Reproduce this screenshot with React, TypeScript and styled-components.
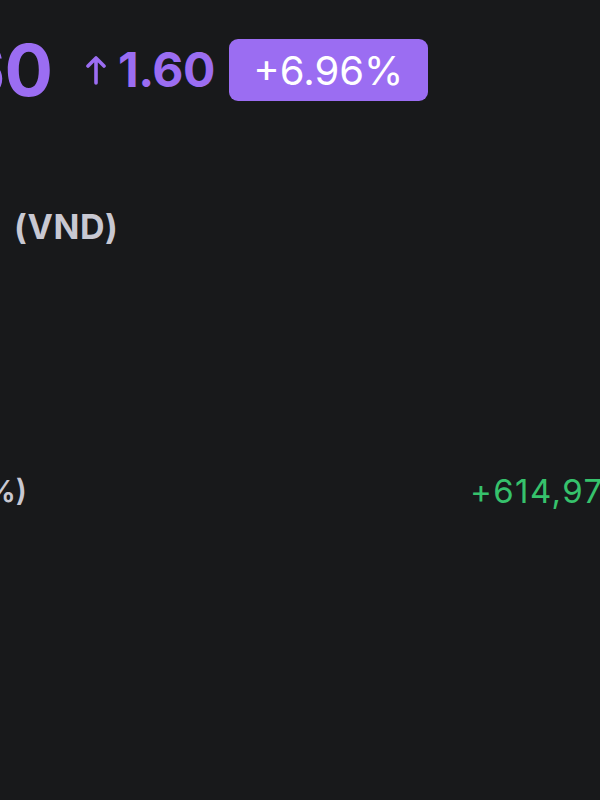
import React from 'react';
import styled, { createGlobalStyle } from 'styled-components';

const GlobalStyle = createGlobalStyle`
  html, body {
    margin: 0;
    padding: 0;
    background: #18191b;
    overflow: hidden;
  }
  body {
    font-family: Inter, "Noto Sans", "Liberation Sans", sans-serif;
  }
`;

const Page = styled.div`
  width: 600px;
  height: 800px;
  display: flex;
  flex-direction: column;
  background: #18191b;
`;

const PriceRow = styled.div`
  display: flex;
  align-items: center;
  height: 62px;
  margin-top: 39px;
`;

// shows only the tail end of a line that starts off-screen
const Tail = styled.div<{ $w: number }>`
  width: ${(p) => p.$w}px;
  flex-shrink: 0;
  display: flex;
  justify-content: flex-end;
  overflow: hidden;
  white-space: nowrap;
`;

const Price = styled.span`
  font-size: 72px;
  font-weight: 700;
  color: #9b6df2;
  letter-spacing: -1px;
  line-height: 1;
`;

const Change = styled.span`
  display: flex;
  align-items: center;
  gap: 12px;
  margin-left: 34px;
  font-size: 48px;
  font-weight: 700;
  color: #9b6df2;
  line-height: 1;
  letter-spacing: -0.5px;
`;

const Badge = styled.span`
  margin-left: 14px;
  height: 62px;
  width: 199px;
  box-sizing: border-box;
  display: flex;
  align-items: center;
  justify-content: center;
  border-radius: 9px;
  background: #9b6df2;
  color: #ffffff;
  font-size: 40px;
  font-weight: 400;
`;

const SectionTitle = styled.div`
  margin-top: 106px;
  display: flex;
  font-size: 34px;
  font-weight: 700;
  color: #c8c8d2;
  letter-spacing: 0.6px;
  line-height: 40px;
`;

const TitleLead = styled.span`
  margin-right: 14px;
`;

const StatRow = styled.div`
  margin-top: 224px;
  display: grid;
  grid-template-columns: 1fr 130px;
  align-items: center;
  line-height: 40px;
`;

const StatLabel = styled.span`
  font-size: 30px;
  font-weight: 600;
  color: #c8c8d2;
`;

const StatValue = styled.span`
  font-size: 33px;
  font-weight: 400;
  color: #36c26c;
  letter-spacing: 1.4px;
  white-space: nowrap;
`;

const UpArrow: React.FC = () => (
  <svg width="20" height="30" viewBox="0 0 20 30" fill="none">
    <path d="M10 28V3M2 11l8-8 8 8" stroke="#9b6df2" strokeWidth="3.6" strokeLinecap="round" strokeLinejoin="round" />
  </svg>
);

const App: React.FC = () => {
  return (
    <Page>
      <GlobalStyle />
      <PriceRow>
        <Tail $w={52}>
          <Price>24.60</Price>
        </Tail>
        <Change>
          <UpArrow />
          1.60
        </Change>
        <Badge>+6.96%</Badge>
      </PriceRow>
      <SectionTitle>
        <Tail $w={14}>
          <TitleLead>Tổng tài sản</TitleLead>
        </Tail>
        <span>(VND)</span>
      </SectionTitle>
      <StatRow>
        <Tail $w={27}>
          <StatLabel>Lãi/lỗ hôm nay (%)</StatLabel>
        </Tail>
        <StatValue>+614,970,000</StatValue>
      </StatRow>
    </Page>
  );
};

export default App;
